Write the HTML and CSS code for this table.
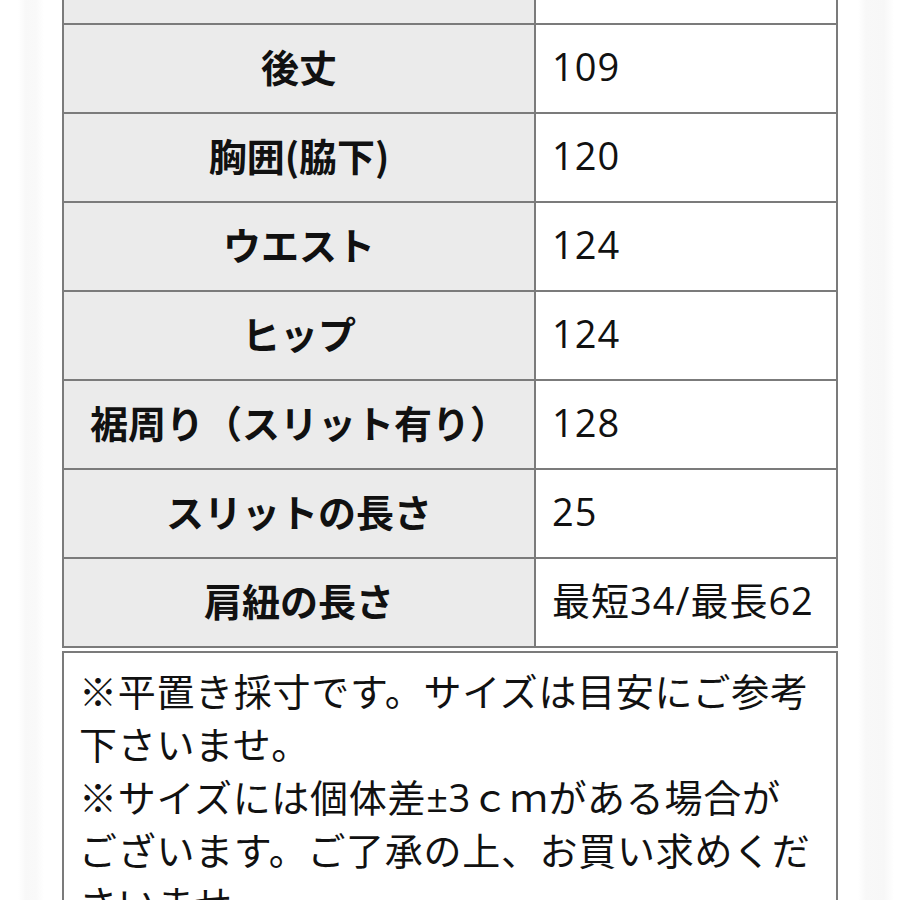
FILE: index.html
```html
<!DOCTYPE html>
<html lang="ja">
<head>
<meta charset="utf-8">
<title>サイズ表</title>
<link rel="stylesheet" href="styles.css">
</head>
<body>
<div class="page">
  <div class="spec">
    <div class="k"></div><div class="v"></div>
    <div class="k">後丈</div><div class="v">109</div>
    <div class="k">胸囲(脇下)</div><div class="v">120</div>
    <div class="k">ウエスト</div><div class="v">124</div>
    <div class="k">ヒップ</div><div class="v">124</div>
    <div class="k">裾周り（スリット有り）</div><div class="v">128</div>
    <div class="k">スリットの長さ</div><div class="v">25</div>
    <div class="k">肩紐の長さ</div><div class="v">最短34/最長62</div>
  </div>
  <div class="note">
    <p>※平置き採寸です。サイズは目安にご参考<br>下さいませ。</p>
    <p>※サイズには個体差±3ｃｍがある場合が<br>ございます。ご了承の上、お買い求めくだ<br>さいませ。</p>
  </div>
</div>
</body>
</html>
```

FILE: styles.css
```css
html, body {
  margin: 0;
  padding: 0;
}
body {
  height: 900px;
  overflow: hidden;
  font-family: "Open Sans", "Noto Sans CJK JP", sans-serif;
  color: #111;
  background: linear-gradient(to right,
    #ffffff 0px, #ffffff 18px, #f8f8f8 26px, #f9f9f9 36px, #ffffff 44px,
    #ffffff 858px, #f8f8f8 866px, #f7f7f7 884px, #ffffff 894px);
}
.page {
  width: 776px;
  margin: -66px 0 0 62px;
}
.spec {
  display: grid;
  grid-template-columns: 472px 302px;
  border-right: 2px solid #7b7b7b;
  border-bottom: 2px solid #7b7b7b;
}
.k, .v {
  box-sizing: border-box;
  height: 89px;
  border-left: 2px solid #7b7b7b;
  border-top: 2px solid #7b7b7b;
  display: flex;
  align-items: center;
  font-size: 38px;
  line-height: 1;
  padding-bottom: 6px;
}
.k {
  background: #ebebeb;
  justify-content: center;
  font-weight: bold;
  font-family: "Noto Sans CJK JP", sans-serif;
}
.v {
  background: #fff;
  padding-left: 16px;
  letter-spacing: 1px;
}
.note {
  margin-top: 3px;
  border: 2px solid #7b7b7b;
  background: #fff;
  padding: 12px 15px;
  font-size: 38px;
  line-height: 53px;
  height: 400px;
  white-space: nowrap;
  letter-spacing: 0.7px;
}
.note p {
  margin: 0;
}
```
